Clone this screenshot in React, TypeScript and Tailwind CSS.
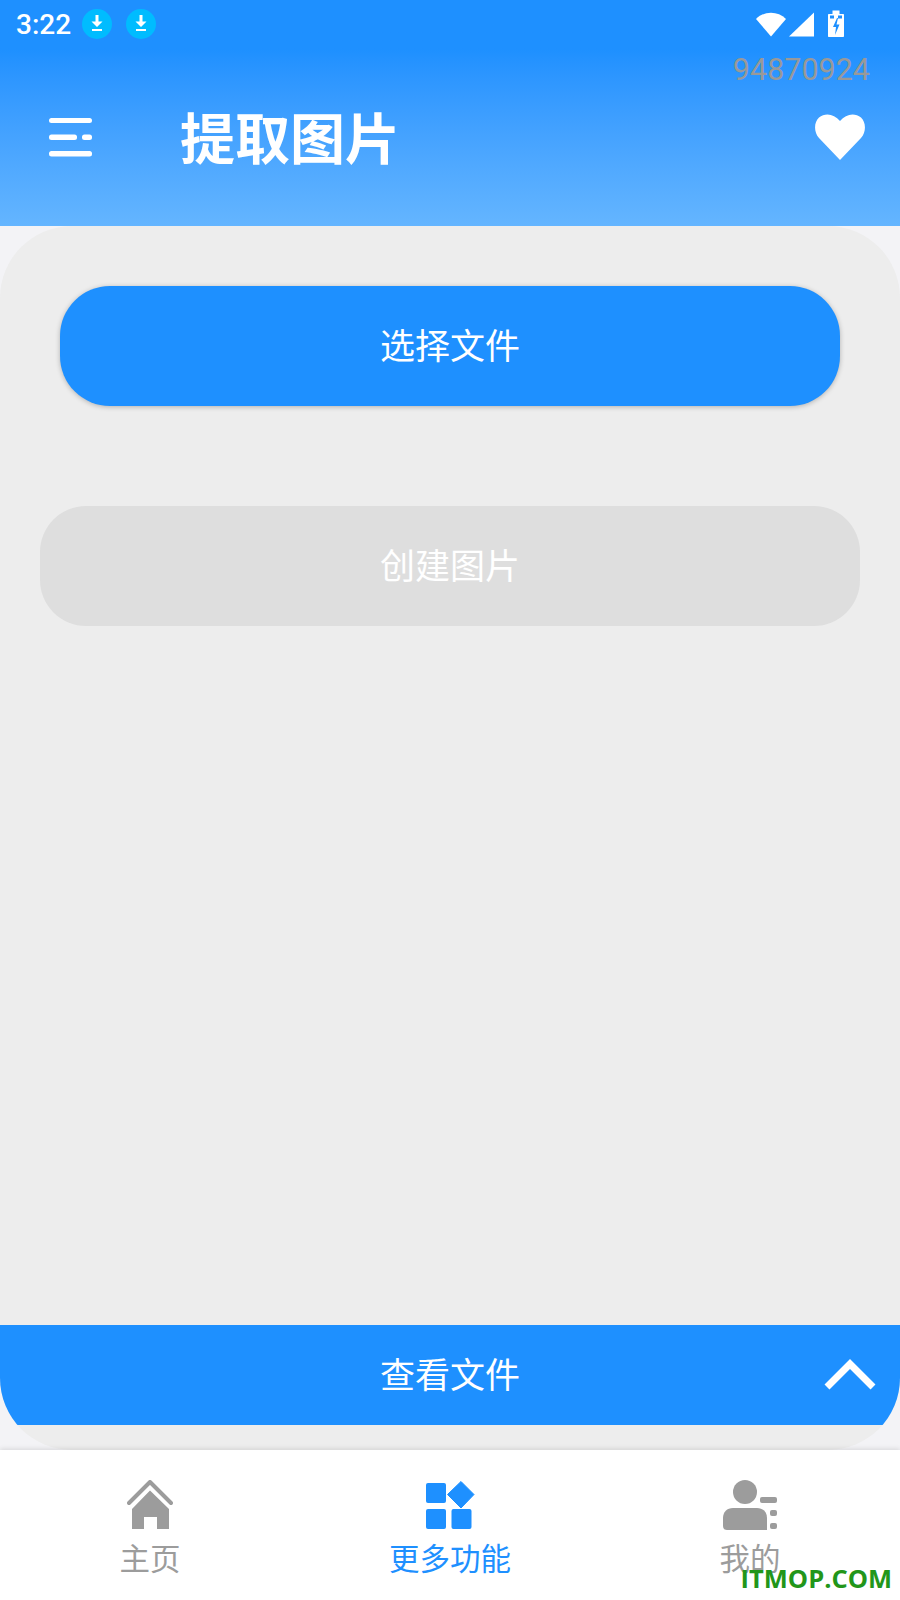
const sans = "font-['Roboto','Noto_Sans_CJK_SC',sans-serif]";

function DownloadBadge() {
  return (
    <svg width="30" height="30" viewBox="0 0 30 30">
      <circle cx="15" cy="15" r="15" fill="#00bcff" />
      <path d="M13.500 6h3v6.500h4L15 18l-5.500-5.500h4z" fill="#fff" />
      <rect x="10" y="20" width="10" height="2" fill="#fff" />
    </svg>
  );
}

function StatusIcons() {
  return (
    <svg width="88" height="30" viewBox="0 0 88 30" className="shrink-0">
      <path d="M0 9C8 .5 22 .5 30 9L15 26.500z" fill="#fff" />
      <path d="M33 26.500L58 2.500v24z" fill="#fff" />
      <path d="M72 5c0-.6.400-1 1-1h3.500V.5h7V4H87c.6 0 1 .4 1 1v21c0 .6-.4 1-1 1H73c-.6 0-1-.4-1-1z" fill="#fff" />
      <path d="M81 8l-4 9h3l-1 8 4.500-10.500H80.500L82 8z" fill="#1e90ff" />
      <rect x="74" y="5.500" width="4" height="3" fill="#1e90ff" />
      <rect x="82" y="5.500" width="4" height="3" fill="#1e90ff" />
    </svg>
  );
}

function HomeIcon() {
  return (
    <svg width="46" height="50" viewBox="0 0 46 50">
      <path d="M2 23L23 2l21 21" fill="none" stroke="#9c9c9c" strokeWidth="4" strokeLinecap="round" strokeLinejoin="round" />
      <path d="M23 10.500L42 29v20H30V37H17v12H5V29z" fill="#9c9c9c" />
    </svg>
  );
}

function GridIcon() {
  return (
    <svg width="50" height="48" viewBox="0 0 50 48">
      <rect x="1" y="2" width="20" height="20" rx="2" fill="#1e90ff" />
      <rect x="1" y="28" width="20" height="20" rx="2" fill="#1e90ff" />
      <rect x="26.500" y="28" width="20" height="20" rx="2" fill="#1e90ff" />
      <path d="M36 .500L49 13.500 36 27 22.500 13.500z" fill="#1e90ff" stroke="#1e90ff" strokeLinejoin="round" />
    </svg>
  );
}

function UserIcon() {
  return (
    <svg width="54" height="50" viewBox="0 0 54 50">
      <circle cx="22" cy="12" r="12" fill="#9c9c9c" />
      <path d="M10 28h24c6 0 10 4 10 10v12H4c-2 0-4-1-4-4v-8c0-6 4-10 10-10z" fill="#9c9c9c" />
      <rect x="37" y="17" width="17" height="6" rx="2" fill="#9c9c9c" />
      <rect x="47" y="30" width="7" height="6" rx="2" fill="#9c9c9c" />
      <rect x="47" y="43" width="7" height="6" rx="2" fill="#9c9c9c" />
    </svg>
  );
}

function NavItem({ icon, label, active }: { icon: React.ReactNode; label: string; active?: boolean }) {
  return (
    <div className="flex flex-col items-center pt-[30px]">
      <div className="h-[50px] flex items-center justify-center">{icon}</div>
      <div className={`text-[30.500px] leading-[40px] mt-[10px] ${active ? "text-[#1e90ff]" : "text-[#9c9c9c]"}`}>{label}</div>
    </div>
  );
}

export default function App() {
  return (
    <div className={`relative w-[900px] h-[1600px] flex flex-col overflow-hidden bg-[#f3f3f6] ${sans}`}>
      <header className="h-[226px] shrink-0 bg-gradient-to-b from-[#1e90ff] from-[22%] to-[#64b5ff] text-white flex flex-col">
        <div className="h-[49px] flex items-center pl-[16px] pr-[56px]">
          <span className="text-[28px] leading-none font-medium font-['Roboto',sans-serif]">3:22</span>
          <div className="flex gap-[14px] ml-[11px] mb-[1px]">
            <DownloadBadge />
            <DownloadBadge />
          </div>
          <div className="ml-auto">
            <StatusIcons />
          </div>
        </div>
        <div className="h-[42px] flex items-center justify-end pr-[30px] text-[30.500px] leading-none text-[#999999] font-['Roboto',sans-serif]">
          94870924
        </div>
        <div className="flex items-center h-[102px] pl-[49px] pr-[35px]">
          <svg width="44" height="40" viewBox="0 0 44 40" className="shrink-0 mb-[8px]">
            <rect x="0" y="0" width="43" height="5" rx="2.500" fill="#fff" />
            <rect x="0" y="16.500" width="28" height="5.500" rx="2.500" fill="#fff" />
            <rect x="33" y="16.500" width="10" height="5.500" rx="2.500" fill="#fff" />
            <rect x="0" y="33" width="43" height="5.500" rx="2.500" fill="#fff" />
          </svg>
          <h1 className="ml-[87px] mb-[3px] text-[55px] leading-none font-bold">提取图片</h1>
          <svg width="50" height="46" viewBox="0 0 50 46" className="ml-auto shrink-0 mb-[10px]">
            <path d="M25 46L4 24C-1.500 18 -1 8 4 3.500 10-1.500 19-.5 25 7c6-7.500 15-8.500 21-3.500 5 4.500 5.500 14.500 0 20.500z" fill="#fff" />
          </svg>
        </div>
      </header>

      <main className="flex-1 bg-[#ededed] rounded-[72px] overflow-hidden flex flex-col">
        <div className="h-[120px] mt-[60px] mx-[60px] pt-[4px] rounded-[50px] bg-[#1e90ff] shadow-[0_1px_5px_rgba(0,0,0,0.25)] text-white text-[35px] flex items-center justify-center">
          选择文件
        </div>
        <div className="h-[120px] mt-[100px] mx-[40px] pt-[4px] rounded-[46px] bg-[#dedede] text-white text-[35px] flex items-center justify-center">
          创建图片
        </div>
        <div className="mt-auto mb-[25px] h-[100px] pt-[4px] bg-[#1e90ff] text-white text-[35px] flex items-center justify-center relative">
          查看文件
          <svg width="52" height="32" viewBox="0 0 52 32" className="absolute right-[24px] top-[33px]">
            <path d="M3 29L26 6l23 23" fill="none" stroke="#fff" strokeWidth="7" />
          </svg>
        </div>
      </main>

      <nav className="h-[150px] shrink-0 bg-white shadow-[0_-1px_5px_rgba(0,0,0,0.12)] relative grid grid-cols-3">
        <NavItem icon={<HomeIcon />} label="主页" />
        <NavItem icon={<GridIcon />} label="更多功能" active />
        <NavItem icon={<UserIcon />} label="我的" />
      </nav>

      <div className="absolute right-[8px] bottom-[9px] text-[25.500px] leading-none font-bold text-[#22961a] font-['Open_Sans',sans-serif]">
        ITMOP.COM
      </div>
    </div>
  );
}
